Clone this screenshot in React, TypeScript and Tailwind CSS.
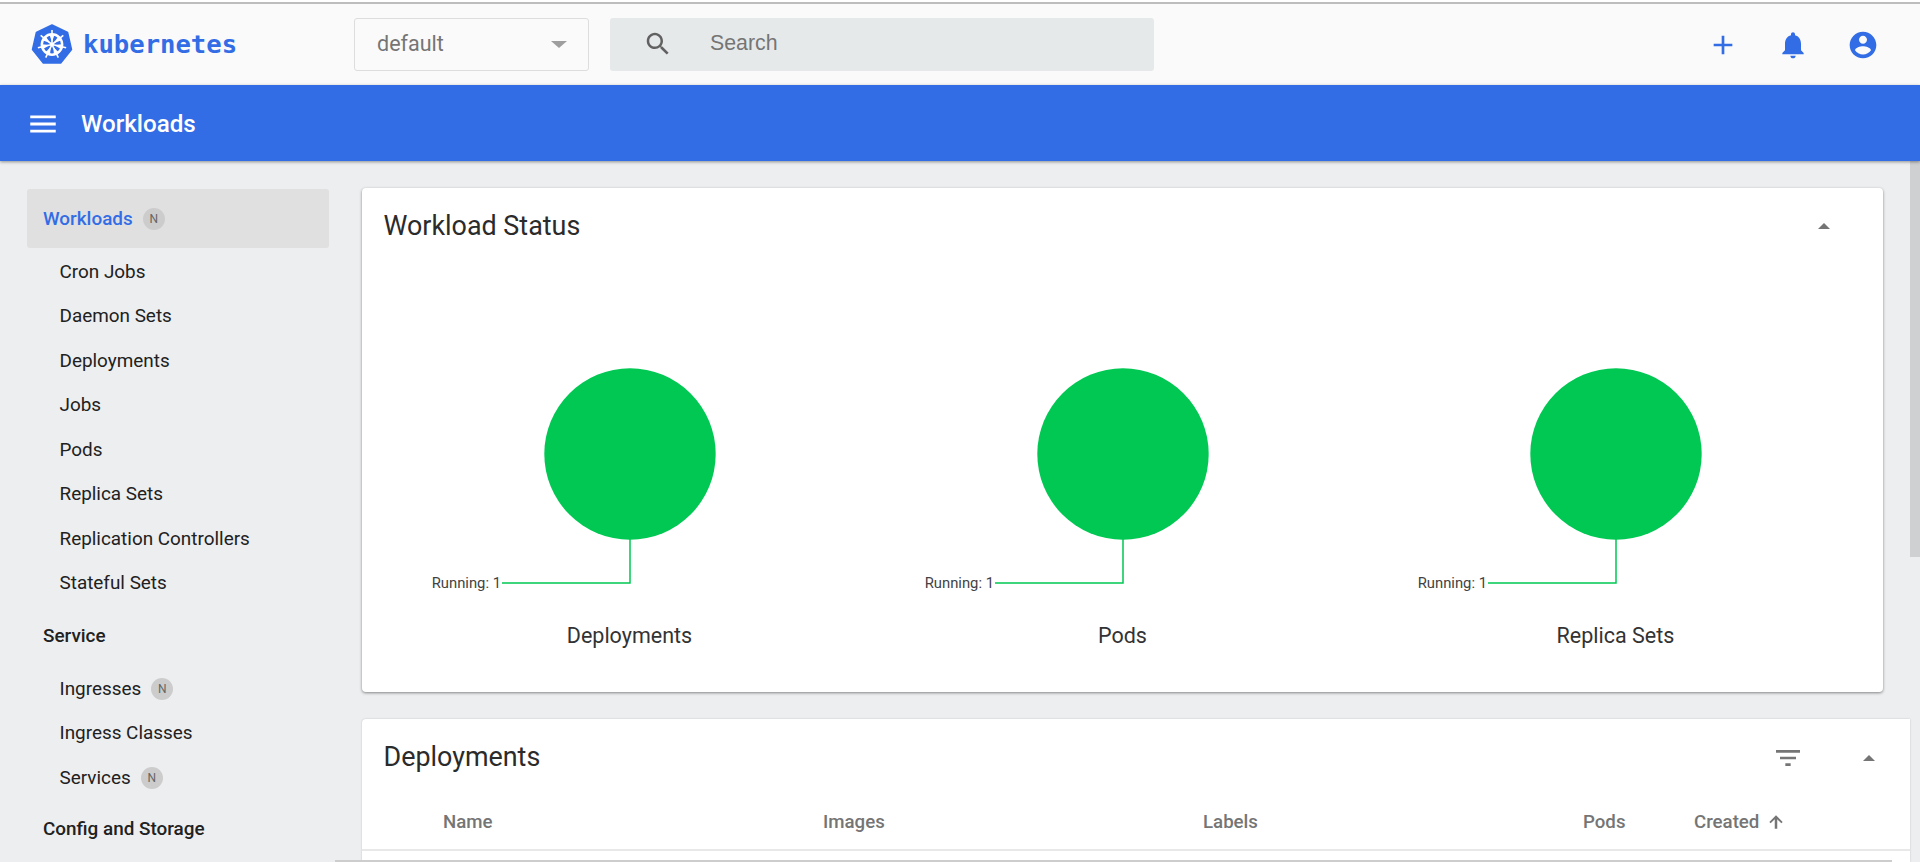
const font = { fontFamily: 'Roboto, sans-serif' };

type NavEntry = { label: string; ns?: boolean };

const workloads: NavEntry[] = [
  { label: 'Cron Jobs' },
  { label: 'Daemon Sets' },
  { label: 'Deployments' },
  { label: 'Jobs' },
  { label: 'Pods' },
  { label: 'Replica Sets' },
  { label: 'Replication Controllers' },
  { label: 'Stateful Sets' },
];

const services: NavEntry[] = [
  { label: 'Ingresses', ns: true },
  { label: 'Ingress Classes' },
  { label: 'Services', ns: true },
];

function Icon({ size, d, color }: { size: number; d: string; color: string }) {
  return (
    <svg width={size} height={size} viewBox="0 0 24 24" fill={color} className="shrink-0">
      <path d={d} />
    </svg>
  );
}

function NsChip() {
  return (
    <span className="ml-[10px] flex h-[22px] w-[22px] items-center justify-center rounded-full bg-[#cccccc] text-[12px] font-normal text-[#666666]">
      N
    </span>
  );
}

function NavItem({ label, ns }: NavEntry) {
  return (
    <div className="flex h-[44.5px] items-center pl-[32.5px] pt-[3px] text-[18.9px] text-[#212121]">
      {label}
      {ns && <NsChip />}
    </div>
  );
}

function Helm() {
  const spokes = [0, 51.4, 102.8, 154.3, 205.7, 257.1, 308.6];
  return (
    <svg width="42" height="42" viewBox="0 0 42 42">
      <path d="M21 1 L36.6 8.5 L40.5 25.5 L29.7 39 L12.3 39 L1.5 25.5 L5.4 8.5 Z" fill="#326de6" stroke="#326de6" strokeWidth="1.5" strokeLinejoin="round" />
      <circle cx="21" cy="20.5" r="10.2" fill="none" stroke="#fff" strokeWidth="2.4" />
      <circle cx="21" cy="20.5" r="2" fill="#fff" />
      {spokes.map((deg) => (
        <g key={deg} transform={`rotate(${deg} 21 20.5)`}>
          <path d="M21 20.5 V6" stroke="#fff" strokeWidth="1.6" />
          <path d="M21 18 L18.6 11 H23.4 Z" fill="#fff" />
        </g>
      ))}
    </svg>
  );
}

function CaretUp() {
  return <span className="block h-0 w-0 border-x-[6.5px] border-b-[6.5px] border-x-transparent border-b-[#757575]" />;
}

function Donut({ title }: { title: string }) {
  return (
    <div className="flex flex-col items-center">
      <svg width="400" height="230" viewBox="0 0 400 230">
        <circle cx="200" cy="86" r="85.7" fill="#00c853" />
        <path d="M200 171 V215 H72" fill="none" stroke="#00c853" strokeWidth="1.5" />
        <text x="71" y="215" textAnchor="end" dominantBaseline="central" fontSize="14.8" fill="#424242" style={font}>
          Running: 1
        </text>
      </svg>
      <div className="mt-[24px] text-[21.5px] leading-[28px] text-[#333333]">{title}</div>
    </div>
  );
}

export default function App() {
  return (
    <div className="flex h-[862px] flex-col overflow-hidden bg-[#edeef0]" style={font}>
      <div className="h-[4px] shrink-0 border-t-2 border-t-[#ffffff] border-b-2 border-b-[#bdbdbd]" />

      <header className="flex h-[81px] shrink-0 items-center bg-[#fafafa]">
        <div className="ml-[31px] flex w-[323px] items-center">
          <Helm />
          <span className="ml-[10px] text-[25.6px] font-bold text-[#326de6]" style={{ fontFamily: '"DejaVu Sans Mono", monospace' }}>
            kubernetes
          </span>
        </div>
        <div className="flex h-[53px] w-[235px] items-center justify-between rounded-[3px] border border-[#dddddd] pb-[1px] pl-[22px] pr-[21px] text-[21.5px] text-[#757575]">
          default
          <span className="h-0 w-0 border-x-[8px] border-t-[7px] border-x-transparent border-t-[#9e9e9e]" />
        </div>
        <div
          className="ml-[21px] flex h-[53px] w-[544px] items-center rounded-[3px] bg-[#e6e9ea] pb-[2px] pl-[33px] text-[21.33px] text-[#757575]"
          style={{ fontFamily: '"Liberation Sans", sans-serif' }}
        >
          <Icon
            size={30}
            color="#616161"
            d="M15.5 14h-.79l-.28-.27C15.41 12.59 16 11.11 16 9.5 16 5.91 13.09 3 9.5 3S3 5.91 3 9.5 5.91 16 9.5 16c1.61 0 3.09-.59 4.23-1.57l.27.28v.79l5 4.99L20.49 19l-4.99-5zm-6 0C7.01 14 5 11.99 5 9.5S7.01 5 9.5 5 14 7.01 14 9.5 11.99 14 9.5 14z"
          />
          <span className="ml-[37px]">Search</span>
        </div>
        <div className="ml-auto mr-[41px] flex items-center gap-[38px]">
          <Icon size={32} color="#326de6" d="M19 13h-6v6h-2v-6H5v-2h6V5h2v6h6v2z" />
          <Icon
            size={32}
            color="#326de6"
            d="M12 22c1.1 0 2-.9 2-2h-4c0 1.1.89 2 2 2zm6-6v-5c0-3.07-1.64-5.64-4.5-6.32V4c0-.83-.67-1.5-1.5-1.5s-1.5.67-1.5 1.5v.68C7.63 5.36 6 7.92 6 11v5l-2 2v1h16v-1l-2-2z"
          />
          <Icon
            size={32}
            color="#326de6"
            d="M12 2C6.48 2 2 6.48 2 12s4.48 10 10 10 10-4.48 10-10S17.52 2 12 2zm0 3c1.66 0 3 1.34 3 3s-1.34 3-3 3-3-1.34-3-3 1.34-3 3-3zm0 14.2c-2.5 0-4.71-1.28-6-3.22.03-1.99 4-3.08 6-3.08 1.99 0 5.97 1.09 6 3.08-1.29 1.94-3.5 3.22-6 3.22z"
          />
        </div>
      </header>

      <div className="z-10 flex h-[76px] shrink-0 items-center bg-[#326de6] pl-[26px] pt-[2px] text-white shadow-[0_1px_3px_rgba(0,0,0,0.4)]">
        <Icon size={34} color="#ffffff" d="M3 18h18v-2H3v2zm0-5h18v-2H3v2zm0-7v2h18V6H3z" />
        <h1 className="ml-[21px] text-[24.2px] font-medium">Workloads</h1>
      </div>

      <div className="relative flex min-h-0 flex-1">
        <aside className="w-[362px] shrink-0 pl-[27px] pt-[28px]">
          <div className="flex h-[59px] w-[302px] items-center rounded-[3px] bg-[#e0e0e0] pl-[16px] pt-[1px] text-[18.9px] font-medium text-[#326de6]">
            Workloads
            <NsChip />
          </div>
          {workloads.map((item) => (
            <NavItem key={item.label} {...item} />
          ))}
          <div className="flex h-[61px] items-center pl-[16px] pt-[3px] text-[18.9px] font-medium text-[#212121]">Service</div>
          {services.map((item) => (
            <NavItem key={item.label} {...item} />
          ))}
          <div className="flex h-[61px] items-center pl-[16px] pt-[1px] text-[18.9px] font-medium text-[#212121]">Config and Storage</div>
        </aside>

        <main className="flex min-w-0 flex-1 flex-col pt-[27px]">
          <section className="mr-[27px] h-[504px] shrink-0 rounded-[4px] bg-white shadow-[0_1px_3px_rgba(0,0,0,0.45)]">
            <div className="flex h-[76px] items-center justify-between pl-[21.5px] pr-[53px]">
              <h2 className="text-[26.9px] text-[#2b2b2b]">Workload Status</h2>
              <CaretUp />
            </div>
            <div className="mt-[104px] grid grid-cols-3 pl-[21px] pr-[21px]">
              <Donut title="Deployments" />
              <Donut title="Pods" />
              <Donut title="Replica Sets" />
            </div>
          </section>

          <section className="mt-[27px] flex-1 rounded-tl-[4px] bg-white shadow-[0_0_2px_rgba(0,0,0,0.2)]">
            <div className="flex h-[76px] items-center pl-[21.5px] pr-[35px] pt-[1px]">
              <h2 className="text-[26.9px] text-[#2b2b2b]">Deployments</h2>
              <span className="ml-auto">
                <Icon size={32} color="#757575" d="M10 18h4v-2h-4v2zM3 6v2h18V6H3zm3 7h12v-2H6v2z" />
              </span>
              <span className="ml-[59px]">
                <CaretUp />
              </span>
            </div>
            <div className="grid h-[56px] grid-cols-[380px_380px_380px_111px_auto] items-center border-b-2 border-b-[#e8e8e8] pl-[81px] text-[18.67px] font-medium text-[#757575]">
              <span>Name</span>
              <span>Images</span>
              <span>Labels</span>
              <span>Pods</span>
              <span className="flex items-center gap-[7px]">
                Created
                <Icon size={20} color="#757575" d="M4 12l1.6 1.6 4.9-5V20h3V8.6l4.9 5L20 12l-8-8-8 8z" />
              </span>
            </div>
          </section>
        </main>

        <div className="w-[10px] shrink-0">
          <div className="h-[396px] bg-[#cfd0d2]" />
        </div>

        <div className="absolute bottom-0 left-[335px] h-[2px] w-[1557px] bg-[#cdcdcd]" />
      </div>
    </div>
  );
}
